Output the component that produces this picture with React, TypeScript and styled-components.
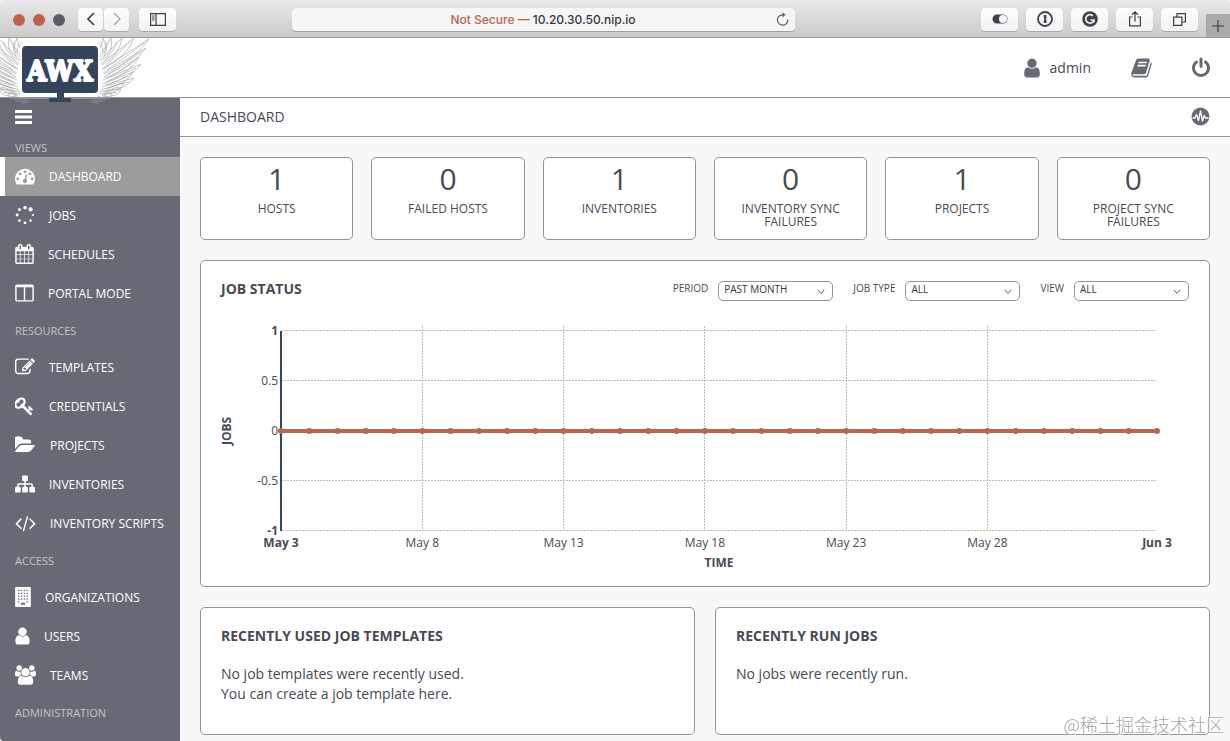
import React from "react";
import styled, { createGlobalStyle } from "styled-components";

const ink = "#484a54";
const slate = "#666a74";
const navy = "#35445a";
const rust = "#b8664f";
const line = "#929497";

const GlobalStyle = createGlobalStyle`
  *, *::before, *::after { box-sizing: border-box; }
  body {
    margin: 0;
    background: #f7f8f7;
    color: ${ink};
    font-family: "Open Sans", "Noto Sans", sans-serif;
    font-size: 14px;
  }
  h1, h2, p, ul, dl, dt, dd { margin: 0; padding: 0; }
  ul { list-style: none; }
  button { font: inherit; color: inherit; cursor: pointer; }
  a { color: inherit; text-decoration: none; }
  svg { display: block; }
`;

/* ---------- browser frame ---------- */

const Page = styled.div`
  display: flex;
  flex-direction: column;
  min-height: 100vh;
`;

const Chrome = styled.div`
  display: flex;
  align-items: flex-start;
  height: 38px;
  padding-top: 8px;
  background: linear-gradient(#e9e9e9, #dadada 50%, #cbcbcb);
  border-bottom: 1px solid #9b9b9b;
  border-radius: 4px 4px 0 0;
`;

const ChromeStart = styled.div`
  display: flex;
  flex: 0 0 292px;
  align-items: center;
  padding-left: 13px;
`;

const ChromeEnd = styled.div`
  display: flex;
  flex: 0 0 435px;
  justify-content: flex-end;
  gap: 8px;
`;

const Lights = styled.div`
  display: flex;
  gap: 8px;
  margin-right: 13px;
`;

const Light = styled.span<{ $color: string }>`
  width: 12px;
  height: 12px;
  border-radius: 50%;
  background: ${(p) => p.$color};
`;

const ChromeButton = styled.button<{ $width?: number }>`
  display: flex;
  align-items: center;
  justify-content: center;
  width: ${(p) => p.$width ?? 37}px;
  height: 23px;
  padding: 0 0 1px;
  border: 0;
  border-radius: 4px;
  background: linear-gradient(#fdfdfd, #f3f3f3);
  box-shadow: 0 1px 0 #a9a9a9, 0 0 1px #b5b5b5;
`;

const NavPair = styled.div`
  display: flex;
  gap: 1px;
  margin-right: 10px;
`;

const NewTab = styled.button`
  display: flex;
  align-items: center;
  justify-content: center;
  width: 24px;
  height: 23px;
  margin-top: 6px;
  padding: 0;
  border: 0;
  background: #aaaaaa;
`;

const AddressBar = styled.div`
  display: flex;
  flex: 1;
  align-items: center;
  height: 23px;
  padding: 0 6px 0 18px;
  border-radius: 4px;
  background: #f6f6f6;
  box-shadow: 0 1px 0 #a0a0a0, 0 0 1px #b5b5b5;
  font: 12px/23px Inter, Roboto, sans-serif;
  color: #34363f;
`;

const Address = styled.span`
  flex: 1;
  text-align: center;
  font-weight: 500;
`;

const Warning = styled.span`
  color: ${rust};
`;

const PlainButton = styled.button`
  display: flex;
  align-items: center;
  padding: 0 0 2px;
  border: 0;
  background: none;
`;

/* ---------- application header ---------- */

const Header = styled.header`
  position: relative;
  display: flex;
  align-items: center;
  justify-content: flex-end;
  height: 60px;
  padding-right: 20px;
  background: #fff;
  border-bottom: 1px solid ${line};
  color: ${slate};
`;

const LogoLink = styled.a`
  position: absolute;
  top: 0;
  left: 0;
  z-index: 1;
`;

const HeaderLinks = styled.nav`
  display: flex;
  align-items: center;
  gap: 40px;
`;

const HeaderLink = styled.a`
  display: flex;
  align-items: center;
  gap: 10px;
  line-height: 20px;
`;

const UserName = styled.span`
  color: ${ink};
`;

const Columns = styled.div`
  display: flex;
  flex: 1;
`;

/* ---------- sidebar ---------- */

const Sidebar = styled.nav`
  flex: 0 0 180px;
  background: ${slate};
  color: #fff;
  font-size: 12px;
  border-bottom-left-radius: 4px;
`;

const MenuToggle = styled(PlainButton)`
  height: 39px;
  padding-left: 15px;
`;

const SectionLabel = styled.h2<{ $first?: boolean }>`
  height: ${(p) => (p.$first ? 20 : 35)}px;
  padding-left: 15px;
  font-size: 11px;
  font-weight: 400;
  line-height: ${(p) => (p.$first ? 22 : 35)}px;
  color: #c3c5ca;
`;

const NavItem = styled.a<{ $active?: boolean }>`
  display: flex;
  align-items: center;
  gap: 14px;
  height: 39px;
  padding-left: 10px;
  border-left: 5px solid ${(p) => (p.$active ? "#fff" : "transparent")};
  background: ${(p) => (p.$active ? "#9b9c9d" : "transparent")};

  svg { margin-bottom: 2px; }
`;

/* ---------- main column ---------- */

const Main = styled.main`
  flex: 1;
  min-width: 0;
`;

const TitleBar = styled.div`
  display: flex;
  align-items: center;
  justify-content: space-between;
  height: 39px;
  padding: 0 20px;
  background: #fff;
  border-bottom: 1px solid ${line};
`;

const PageTitle = styled.h1`
  padding-bottom: 2px;
  font-size: 14px;
  font-weight: 400;
`;

const Content = styled.div`
  display: flex;
  flex-direction: column;
  gap: 20px;
  padding: 20px 20px 6px;
`;

const Stats = styled.div`
  display: grid;
  grid-template-columns: repeat(6, 1fr);
  gap: 18px;
`;

const Panel = styled.section`
  background: #fff;
  border: 1px solid ${line};
  border-radius: 5px;
`;

const Stat = styled.a`
  display: block;
  min-height: 83px;
  padding: 0 20px;
  background: #fff;
  border: 1px solid ${line};
  border-radius: 5px;
  text-align: center;
`;

const StatValue = styled.strong`
  display: block;
  margin-bottom: 2px;
  font-size: 30px;
  font-weight: 400;
  line-height: 42px;
`;

const StatLabel = styled.span`
  display: block;
  font-size: 12px;
  line-height: 13px;
`;

const ChartPanel = styled(Panel)`
  padding: 20px 20px 10px;
`;

const PanelHeader = styled.div`
  display: flex;
  justify-content: space-between;
  align-items: flex-start;
`;

const PanelTitle = styled.h2`
  font-size: 14px;
  font-weight: 700;
  line-height: 16px;
`;

const Filters = styled.div`
  display: flex;
  gap: 20px;
`;

const Filter = styled.label`
  display: flex;
  gap: 10px;
  font-size: 10px;
  line-height: 14px;
`;

const SelectBox = styled.span`
  position: relative;
  display: block;
  width: 115px;

  svg {
    position: absolute;
    top: 8px;
    right: 8px;
    pointer-events: none;
  }
`;

const Select = styled.select`
  appearance: none;
  width: 100%;
  height: 20px;
  padding: 0 20px 3px 5px;
  border: 1px solid ${line};
  border-radius: 5px;
  background: #fff;
  color: #34363f;
  font: 500 10px/15px "Open Sans", sans-serif;
`;

const ChartArea = styled.div`
  margin-top: 20px;
  padding: 0 32px 0 60px;
`;

const ChartSvg = styled.svg`
  width: 100%;
  height: 255px;
  overflow: visible;
  font-size: 12px;

  text { fill: ${ink}; }
  .bold { font-weight: 700; }
  .grid { stroke: #bcbcbc; stroke-dasharray: 2 1; shape-rendering: crispEdges; }
`;

const RecentPanels = styled.div`
  display: grid;
  grid-template-columns: repeat(2, 1fr);
  gap: 20px;
`;

const RecentPanel = styled(Panel)`
  padding: 20px;
`;

const RecentText = styled.p`
  min-height: 50px;
  margin-top: 20px;
  line-height: 20px;
`;

const Watermark = styled.div`
  position: fixed;
  right: 6px;
  bottom: 4px;
  font: 300 18px/26px "Noto Sans CJK SC", sans-serif;
  color: #a3a3a6;
  text-shadow: 0 0 1px #fff, 1px 1px 0 #fff;
  pointer-events: none;
`;

/* ---------- icons ---------- */

type Glyph = { box: string; width: number; shape: React.ReactNode };

const spinnerDots: [number, number, number][] = [
  [896, 250, 160],
  [1394, 398, 190],
  [1600, 896, 96],
  [1394, 1394, 110],
  [896, 1600, 128],
  [398, 1394, 120],
  [192, 896, 128],
  [398, 398, 140],
];

const windowRows = [256, 512, 768, 1024];
const windowCols = [256, 512, 768, 1024];

const glyphs: Record<string, Glyph> = {
  dashboard: {
    box: "0 0 1792 1792",
    width: 20,
    shape: (
      <path d="M384 1152q0-53-37.5-90.5t-90.5-37.5-90.5 37.5-37.5 90.5 37.5 90.5 90.5 37.5 90.5-37.5 37.5-90.5zm192-448q0-53-37.5-90.5t-90.5-37.5-90.5 37.5-37.5 90.5 37.5 90.5 90.5 37.5 90.5-37.5 37.5-90.5zm428 481l101-382q6-26-7.5-48.5t-38.5-29.5-48 6.5-30 39.5l-101 382q-60 5-107 43.5t-63 98.5q-20 77 20 146t117 89 146-20 89-117q16-60-6-117t-72-91zm660-33q0-53-37.5-90.5t-90.5-37.5-90.5 37.5-37.5 90.5 37.5 90.5 90.5 37.5 90.5-37.5 37.5-90.5zm-640-640q0-53-37.5-90.5t-90.5-37.5-90.5 37.5-37.5 90.5 37.5 90.5 90.5 37.5 90.5-37.5 37.5-90.5zm448 192q0-53-37.5-90.5t-90.5-37.5-90.5 37.5-37.5 90.5 37.5 90.5 90.5 37.5 90.5-37.5 37.5-90.5zm320 448q0 261-141 483-19 29-54 29h-1402q-35 0-54-29-141-221-141-483 0-182 71-348t191-286 286-191 348-71 348 71 286 191 191 286 71 348z" />
    ),
  },
  jobs: {
    box: "0 0 1792 1792",
    width: 20,
    shape: spinnerDots.map(([cx, cy, r]) => <circle key={`${cx}-${cy}`} cx={cx} cy={cy} r={r} />),
  },
  schedules: {
    box: "64 0 1664 1792",
    width: 19,
    shape: (
      <path d="M192 1664h288v-288h-288v288zm352 0h320v-288h-320v288zm-352-352h288v-320h-288v320zm352 0h320v-320h-320v320zm-352-384h288v-288h-288v288zm736 736h320v-288h-320v288zm-384-736h320v-288h-320v288zm768 736h288v-288h-288v288zm-384-352h320v-320h-320v320zm-352-864v-288q0-13-9.5-22.5t-22.5-9.5h-64q-13 0-22.5 9.5t-9.5 22.5v288q0 13 9.5 22.5t22.5 9.5h64q13 0 22.5-9.5t9.5-22.5zm736 864h288v-320h-288v320zm-384-384h320v-288h-320v288zm384 0h288v-288h-288v288zm32-480v-288q0-13-9.5-22.5t-22.5-9.5h-64q-13 0-22.5 9.5t-9.5 22.5v288q0 13 9.5 22.5t22.5 9.5h64q13 0 22.5-9.5t9.5-22.5zm384-64v1280q0 52-38 90t-90 38h-1408q-52 0-90-38t-38-90v-1280q0-52 38-90t90-38h128v-96q0-66 47-113t113-47h64q66 0 113 47t47 113v96h384v-96q0-66 47-113t113-47h64q66 0 113 47t47 113v96h128q52 0 90 38t38 90z" />
    ),
  },
  portal: {
    box: "64 0 1664 1792",
    width: 19,
    shape: (
      <path d="M224 1536h608v-1152h-640v1120q0 13 9.5 22.5t22.5 9.5zm1376-32v-1120h-640v1152h608q13 0 22.5-9.5t9.5-22.5zm128-1216v1216q0 66-47 113t-113 47h-1344q-66 0-113-47t-47-113v-1216q0-66 47-113t113-47h1344q66 0 113 47t47 113z" />
    ),
  },
  templates: {
    box: "0 0 1792 1792",
    width: 20,
    shape: (
      <path d="M888 1184l116-116-152-152-116 116v56h96v96h56zm440-720q-16-16-33 1l-350 350q-17 17-1 33t33-1l350-350q17-17 1-33zm80 594v190q0 119-84.5 203.5t-203.5 84.5h-832q-119 0-203.5-84.5t-84.5-203.5v-832q0-119 84.5-203.5t203.5-84.5h832q63 0 117 25 15 7 18 23 3 17-9 29l-49 49q-14 14-32 8-23-6-45-6h-832q-66 0-113 47t-47 113v832q0 66 47 113t113 47h832q66 0 113-47t47-113v-126q0-13 9-22l64-64q15-15 35-7t20 29zm-96-738l288 288-672 672h-288v-288zm444 132l-92 92-288-288 92-92q28-28 68-28t68 28l152 152q28 28 28 68t-28 68z" />
    ),
  },
  credentials: {
    box: "64 0 1792 1792",
    width: 20,
    shape: (
      <path d="M832 512q0-80-56-136t-136-56-136 56-56 136q0 42 19 83-41-19-83-19-80 0-136 56t-56 136 56 136 136 56 136-56 56-136q0-42-19-83 41 19 83 19 80 0 136-56t56-136zm851 704q0 17-49 66t-66 49q-9 0-28.5-16t-36.5-33-38.5-40-24.5-26l-96 96 220 220q28 28 28 68 0 42-39 81t-81 39q-40 0-68-28l-671-671q-176 131-365 131-163 0-265.5-102.5t-102.5-265.5q0-160 95-313t248-248 313-95q163 0 265.5 102.5t102.5 265.5q0 189-131 365l355 355 96-96q-3-3-26-24.5t-40-38.5-33-36.5-16-28.5q0-17 49-66t66-49q13 0 23 10 6 6 46 44.5t82 79.5 86.5 86 73 78 28.5 41z" />
    ),
  },
  projects: {
    box: "0 0 1920 1792",
    width: 21,
    shape: (
      <path d="M1815 952q0 31-31 66l-336 396q-43 51-120.5 86.5t-143.5 35.5h-1088q-34 0-60.5-13t-26.5-43q0-31 31-66l336-396q43-51 120.5-86.5t143.5-35.5h1088q34 0 60.5 13t26.5 43zm-343-344v160h-832q-94 0-197 47.5t-164 119.5l-337 396-5 6q0-4-.5-12.5t-.5-12.5v-960q0-92 66-158t158-66h320q92 0 158 66t66 158v32h544q92 0 158 66t66 158z" />
    ),
  },
  inventories: {
    box: "0 0 1792 1792",
    width: 20,
    shape: (
      <path d="M1792 1248v320q0 40-28 68t-68 28h-320q-40 0-68-28t-28-68v-320q0-40 28-68t68-28h96v-192h-512v192h96q40 0 68 28t28 68v320q0 40-28 68t-68 28h-320q-40 0-68-28t-28-68v-320q0-40 28-68t68-28h96v-192h-512v192h96q40 0 68 28t28 68v320q0 40-28 68t-68 28h-320q-40 0-68-28t-28-68v-320q0-40 28-68t68-28h96v-192q0-52 38-90t90-38h512v-192h-96q-40 0-68-28t-28-68v-320q0-40 28-68t68-28h320q40 0 68 28t28 68v320q0 40-28 68t-68 28h-96v192h512q52 0 90 38t38 90v192h96q40 0 68 28t28 68z" />
    ),
  },
  scripts: {
    box: "0 0 1920 1792",
    width: 21,
    shape: (
      <path d="M617 1399l-50 50q-10 10-23 10t-23-10l-466-466q-10-10-10-23t10-23l466-466q10-10 23-10t23 10l50 50q10 10 10 23t-10 23l-393 393 393 393q10 10 10 23t-10 23zm591-1067l-373 1291q-4 13-15.5 19.5t-23.5 2.5l-62-17q-13-4-19.5-15.5t-2.5-24.5l373-1291q4-13 15.5-19.5t23.5-2.5l62 17q13 4 19.5 15.5t2.5 24.5zm657 651l-466 466q-10 10-23 10t-23-10l-50-50q-10-10-10-23t10-23l393-393-393-393q-10-10-10-23t10-23l50-50q10-10 23-10t23 10l466 466q10 10 10 23t-10 23z" />
    ),
  },
  organizations: {
    box: "0 0 1408 1792",
    width: 16,
    shape: (
      <path
        fillRule="evenodd"
        d={
          "M64 0h1280q64 0 64 64v1664q0 64-64 64H64q-64 0-64-64V64Q0 0 64 0zM512 1408v192h384v-192z" +
          windowRows
            .map((y) => windowCols.map((x) => `M${x} ${y}v110h128v-110z`).join(""))
            .join("") +
          "M256 1280v110h128v-110zM1024 1280v110h128v-110z"
        }
      />
    ),
  },
  user: {
    box: "256 0 1280 1792",
    width: 15,
    shape: (
      <path d="M1536 1399q0 109-62.5 187t-150.5 78h-854q-88 0-150.5-78t-62.5-187q0-85 8.5-160.5t31.5-152 58.5-131 94-89 134.5-34.5q131 128 313 128t313-128q76 0 134.5 34.5t94 89 58.5 131 31.5 152 8.5 160.5zm-256-887q0 159-112.5 271.5t-271.5 112.5-271.5-112.5-112.5-271.5 112.5-271.5 271.5-112.5 271.5 112.5 112.5 271.5z" />
    ),
  },
  teams: {
    box: "0 0 1920 1792",
    width: 21,
    shape: (
      <path d="M593 896q-162 5-265 128h-134q-82 0-138-40.5t-56-118.5q0-353 124-353 6 0 43.5 21t97.5 42.5 119 21.5q67 0 133-23-5 37-5 66 0 139 81 256zm1071 637q0 120-73 189.5t-194 69.5h-874q-121 0-194-69.5t-73-189.5q0-53 3.5-103.5t14-109 26.5-108.5 43-97.5 62-81 85.5-53.5 111.5-20q10 0 43 21.5t73 48 107 48 135 21.5 135-21.5 107-48 73-48 43-21.5q61 0 111.5 20t85.5 53.5 62 81 43 97.5 26.5 108.5 14 109 3.5 103.5zm-1024-1277q0 106-75 181t-181 75-181-75-75-181 75-181 181-75 181 75 75 181zm704 384q0 159-112.5 271.5t-271.5 112.5-271.5-112.5-112.5-271.5 112.5-271.5 271.5-112.5 271.5 112.5 112.5 271.5zm576 225q0 78-56 118.5t-138 40.5h-134q-103-123-265-128 81-117 81-256 0-29-5-66 66 23 133 23 59 0 119-21.5t97.5-42.5 43.5-21q124 0 124 353zm-128-609q0 106-75 181t-181 75-181-75-75-181 75-181 181-75 181 75 75 181z" />
    ),
  },
  book: {
    box: "64 0 1664 1792",
    width: 21,
    shape: (
      <path d="M1703 478q40 57 18 129l-275 906q-19 64-76.5 107.5t-122.5 43.5h-923q-77 0-148.5-53.5t-99.5-131.5q-24-67-2-127 0-4 3-27t4-37q1-8-3-21.5t-3-19.5q2-11 8-21t16.5-23.5 16.5-23.5q23-38 45-91.5t30-91.5q3-10 .5-30t-.5-28q3-11 17-28t17-23q21-36 42-92t25-90q1-9-2.5-32t.5-28q4-13 22-30.5t22-22.5q19-26 42.5-84.5t27.5-96.5q1-8-3-25.5t-2-26.5q2-8 9-18t18-23 17-21q8-12 16.5-30.5t15-35 16-36 19.5-32 26.5-23.5 36-11.5 47.5 5.5l-1 3q38-9 51-9h761q74 0 114 56t18 130l-274 906q-36 119-71.5 153.5t-128.5 34.5h-869q-27 0-38 15-11 16-1 43 24 70 144 70h923q29 0 56-15.5t35-41.5l300-987q7-22 5-57 38 15 59 43zm-1064 2q-4 13 2 22.5t20 9.5h608q13 0 25.5-9.5t16.5-22.5l21-64q4-13-2-22.5t-20-9.5h-608q-13 0-25.5 9.5t-16.5 22.5zm-83 256q-4 13 2 22.5t20 9.5h608q13 0 25.5-9.5t16.5-22.5l21-64q4-13-2-22.5t-20-9.5h-608q-13 0-25.5 9.5t-16.5 22.5z" />
    ),
  },
  power: {
    box: "128 0 1536 1792",
    width: 18,
    shape: (
      <path d="M1664 896q0 156-61 298t-164 245-245 164-298 61-298-61-245-164-164-245-61-298q0-182 80.5-343t226.5-270q43-32 95.5-25t83.5 50q32 42 24.5 94.5t-49.5 84.5q-98 74-151.5 181t-53.5 228q0 104 40.5 198.5t109.5 163.5 163.5 109.5 198.5 40.5 198.5-40.5 163.5-109.5 109.5-163.5 40.5-198.5q0-121-53.5-228t-151.5-181q-42-32-49.5-84.5t24.5-94.5q31-43 84-50t95 25q146 109 226.5 270t80.5 343zm-640-768v640q0 52-38 90t-90 38-90-38-38-90v-640q0-52 38-90t90-38 90 38 38 90z" />
    ),
  },
};

function Icon({ name, width, height = 20 }: { name: string; width?: number; height?: number }) {
  const g = glyphs[name];
  return (
    <svg viewBox={g.box} width={width ?? g.width} height={height} fill="currentColor" aria-hidden="true">
      {g.shape}
    </svg>
  );
}

/* Each feather runs from its root to its tip and back: root x, root y, tip x, tip y. */
const feathers = [
  [100, 22, 122, 0],
  [101, 26, 134, 0],
  [102, 31, 149, 1],
  [103, 35, 146, 10],
  [104, 39, 139, 19],
  [103, 42, 141, 26],
  [103, 46, 133, 34],
  [102, 49, 134, 40],
  [101, 52, 124, 45],
  [100, 54, 121, 51],
  [97, 56, 112, 56],
  [93, 57, 104, 61],
  [88, 58, 97, 64],
  [99, 18, 111, 0],
  [98, 14, 103, 0],
];

function Wing() {
  return (
    <>
      {feathers.map(([x, y, tx, ty]) => {
        const mx = (x + tx) / 2;
        const my = (y + ty) / 2;
        return (
          <path
            key={`${tx}-${ty}`}
            d={`M${x} ${y}Q${mx + 2} ${my - 1} ${tx} ${ty}Q${mx + 9} ${my + 6} ${x + 2} ${y + 5}M${x + 5} ${y + 1}Q${mx + 3} ${my + 1} ${tx - 5} ${ty + 4}`}
          />
        );
      })}
    </>
  );
}

function Logo() {
  return (
    <svg width="152" height="66" viewBox="0 0 152 66" role="img" aria-label="AWX">
      <g fill="none" stroke="#a8aaac" strokeWidth="0.7">
        <Wing />
        <g transform="translate(120 0) scale(-1 1)">
          <Wing />
        </g>
      </g>
      <path d="M20 59V12q0-6 6-6h68q6 0 6 6v43q0 4-4 4z" fill="#fff" />
      <path d="M0 60h152v6H0z" fill={slate} opacity="0.4" />
      <path d="M20 59h80v2H20z" fill={line} />
      <path d="M57 54h7v6h7v4H49v-4h8z" fill={navy} />
      <rect x="22" y="8" width="76" height="47" rx="4" fill={navy} />
      <text
        x="60"
        y="43"
        fill="#fff"
        stroke="#fff"
        strokeWidth="2"
        strokeLinejoin="bevel"
        textAnchor="middle"
        fontFamily="'DejaVu Serif Condensed', 'DejaVu Serif', serif"
        fontWeight="700"
        fontSize="28"
      >
        AWX
      </text>
    </svg>
  );
}

/* ---------- chart ---------- */

const DAYS = 31;
const xTicks = [
  { day: 0, label: "May 3", bold: true },
  { day: 5, label: "May 8" },
  { day: 10, label: "May 13" },
  { day: 15, label: "May 18" },
  { day: 20, label: "May 23" },
  { day: 25, label: "May 28" },
  { day: 31, label: "Jun 3", bold: true },
];
const yTicks = [
  { y: 9, label: "1", bold: true },
  { y: 59, label: "0.5" },
  { y: 109, label: "0" },
  { y: 159, label: "-0.5" },
  { y: 209, label: "-1", bold: true },
];
const at = (day: number) => `${(day / DAYS) * 100}%`;

function JobChart() {
  return (
    <ChartArea>
      <ChartSvg role="img" aria-label="Jobs over time">
        {yTicks.map((t) => (
          <React.Fragment key={t.label}>
            <line className="grid" x1="0" x2="100%" y1={t.y} y2={t.y} />
            <text className={t.bold ? "bold" : undefined} x="-3" y={t.y + 5} textAnchor="end">
              {t.label}
            </text>
          </React.Fragment>
        ))}
        {xTicks.map((t) => (
          <React.Fragment key={t.label}>
            {!t.bold && <line className="grid" x1={at(t.day)} x2={at(t.day)} y1="5" y2="210" />}
            <text className={t.bold ? "bold" : undefined} x={at(t.day)} y="226" textAnchor="middle">
              {t.label}
            </text>
          </React.Fragment>
        ))}
        <line x1="0" x2="0" y1="10" y2="210" stroke={navy} strokeWidth="2" />
        <line x1="0" x2="100%" y1="110" y2="110" stroke={rust} strokeWidth="4" />
        {Array.from({ length: DAYS + 1 }, (_, i) => (
          <circle key={i} cx={at(i)} cy="110" r="3" fill={rust} />
        ))}
        <text className="bold" x="50%" y="246" textAnchor="middle">
          TIME
        </text>
        <text className="bold" textAnchor="middle" transform="translate(-50 110) rotate(-90)">
          JOBS
        </text>
      </ChartSvg>
    </ChartArea>
  );
}

/* ---------- content ---------- */

const sections = [
  {
    label: "VIEWS",
    items: [
      ["dashboard", "DASHBOARD"],
      ["jobs", "JOBS"],
      ["schedules", "SCHEDULES"],
      ["portal", "PORTAL MODE"],
    ],
  },
  {
    label: "RESOURCES",
    items: [
      ["templates", "TEMPLATES"],
      ["credentials", "CREDENTIALS"],
      ["projects", "PROJECTS"],
      ["inventories", "INVENTORIES"],
      ["scripts", "INVENTORY SCRIPTS"],
    ],
  },
  {
    label: "ACCESS",
    items: [
      ["organizations", "ORGANIZATIONS"],
      ["user", "USERS"],
      ["teams", "TEAMS"],
    ],
  },
  { label: "ADMINISTRATION", items: [] },
];

const stats: [number, string][] = [
  [1, "HOSTS"],
  [0, "FAILED HOSTS"],
  [1, "INVENTORIES"],
  [0, "INVENTORY SYNC FAILURES"],
  [1, "PROJECTS"],
  [0, "PROJECT SYNC FAILURES"],
];

const filters: [string, string][] = [
  ["PERIOD", "PAST MONTH"],
  ["JOB TYPE", "ALL"],
  ["VIEW", "ALL"],
];

function BrowserChrome() {
  const stroke = { fill: "none", stroke: "#3c3e48", strokeWidth: 1.2 };
  return (
    <Chrome>
      <ChromeStart>
        <Lights>
          <Light $color="#c0614c" />
          <Light $color="#c0614c" />
          <Light $color="#5a5c66" />
        </Lights>
        <NavPair>
          <ChromeButton $width={25} aria-label="Back">
            <svg width="8" height="14" viewBox="0 0 8 14" {...stroke} strokeWidth={1.6}>
              <path d="M7 1L1 7l6 6" />
            </svg>
          </ChromeButton>
          <ChromeButton $width={25} aria-label="Forward">
            <svg width="8" height="14" viewBox="0 0 8 14" {...stroke} stroke="#a0a0a0">
              <path d="M1 1l6 6-6 6" />
            </svg>
          </ChromeButton>
        </NavPair>
        <ChromeButton aria-label="Sidebar">
          <svg width="16" height="13" viewBox="0 0 16 13" {...stroke}>
            <path d="M.6.6h14.8v11.8H.6zM6 .6v11.8M2 3h2.500M2 5h2.500M2 7h2.500" />
          </svg>
        </ChromeButton>
      </ChromeStart>
      <AddressBar>
        <Address>
          <Warning>Not Secure —</Warning> 10.20.30.50.nip.io
        </Address>
        <PlainButton aria-label="Reload">
          <svg width="13" height="14" viewBox="0 0 13 14" fill="none" stroke="#5c5e66" strokeWidth="1.2">
            <path d="M11.800 7.500A5.200 5.200 0 1 1 6.500 2.800H8" />
            <path d="M6.500.2L9.500 2.800 6.500 5.400z" fill="#5c5e66" stroke="none" />
          </svg>
        </PlainButton>
      </AddressBar>
      <ChromeEnd>
        <ChromeButton aria-label="Toggle">
          <svg width="16" height="10" viewBox="0 0 16 10">
            <rect x=".5" y=".5" width="15" height="9" rx="4.500" fill="#40424e" />
            <circle cx="11" cy="5" r="4" fill="#fafafa" />
          </svg>
        </ChromeButton>
        <ChromeButton aria-label="Passwords">
          <svg width="16" height="16" viewBox="0 0 16 16">
            <circle cx="8" cy="8" r="7" fill="none" stroke="#40424e" strokeWidth="1.800" />
            <path d="M6.800 4h2.700v3l-.7 1 .7 1v3H6.800V9l.7-1-.7-1z" fill="#40424e" />
          </svg>
        </ChromeButton>
        <ChromeButton aria-label="Grammar">
          <svg width="16" height="16" viewBox="0 0 16 16">
            <circle cx="8" cy="8" r="7.800" fill="#40424e" />
            <path d="M10.800 4.800A4.200 4.200 0 1 0 12 9H8.500M12 8.500v3" fill="none" stroke="#eee" strokeWidth="1.700" />
          </svg>
        </ChromeButton>
        <ChromeButton aria-label="Share">
          <svg width="12" height="16" viewBox="0 0 12 16" {...stroke}>
            <path d="M3.500 6H.6v8.800h10.800V6H8.500M6 10.500V1M3 3.800L6 .9l3 2.900" />
          </svg>
        </ChromeButton>
        <ChromeButton aria-label="Tabs">
          <svg width="13" height="13" viewBox="0 0 13 13" {...stroke}>
            <path d="M.6 4.100h8.300v8.300H.6zM4 4V.6h8.400V9H9" />
          </svg>
        </ChromeButton>
        <NewTab aria-label="New tab">
          <svg width="12" height="12" viewBox="0 0 12 12" {...stroke}>
            <path d="M6 0v12M0 6h12" />
          </svg>
        </NewTab>
      </ChromeEnd>
    </Chrome>
  );
}

export default function App() {
  return (
    <Page>
      <GlobalStyle />
      <BrowserChrome />
      <Header>
        <LogoLink href="#" aria-label="AWX home">
          <Logo />
        </LogoLink>
        <HeaderLinks>
          <HeaderLink href="#">
            <Icon name="user" width={16} height={22} />
            <UserName>admin</UserName>
          </HeaderLink>
          <HeaderLink href="#" aria-label="Documentation">
            <Icon name="book" height={22} />
          </HeaderLink>
          <HeaderLink href="#" aria-label="Log out">
            <Icon name="power" height={22} />
          </HeaderLink>
        </HeaderLinks>
      </Header>
      <Columns>
        <Sidebar>
          <MenuToggle aria-label="Toggle menu">
            <svg width="17" height="14" viewBox="0 0 17 14" fill="#fff">
              <path d="M0 0h17v3H0zM0 5.500h17v3H0zM0 11h17v3H0z" />
            </svg>
          </MenuToggle>
          {sections.map((section, s) => (
            <React.Fragment key={section.label}>
              <SectionLabel $first={s === 0}>{section.label}</SectionLabel>
              <ul>
                {section.items.map(([icon, label]) => (
                  <li key={label}>
                    <NavItem href="#" $active={icon === "dashboard"}>
                      <Icon name={icon} />
                      {label}
                    </NavItem>
                  </li>
                ))}
              </ul>
            </React.Fragment>
          ))}
        </Sidebar>
        <Main>
          <TitleBar>
            <PageTitle>DASHBOARD</PageTitle>
            <PlainButton aria-label="Activity stream">
              <svg width="19" height="19" viewBox="0 0 19 19">
                <circle cx="9.500" cy="9.500" r="9" fill={slate} />
                <path
                  d="M1.500 11H4l1.500-3.500 2 6L9.500 4l2 10 1.800-5.500L14.500 11h3"
                  fill="none"
                  stroke="#fff"
                  strokeWidth="1.300"
                  strokeLinejoin="round"
                />
              </svg>
            </PlainButton>
          </TitleBar>
          <Content>
            <Stats>
              {stats.map(([value, label]) => (
                <Stat key={label} href="#">
                  <StatValue>{value}</StatValue>
                  <StatLabel>{label}</StatLabel>
                </Stat>
              ))}
            </Stats>
            <ChartPanel>
              <PanelHeader>
                <PanelTitle>JOB STATUS</PanelTitle>
                <Filters>
                  {filters.map(([label, value]) => (
                    <Filter key={label}>
                      {label}
                      <SelectBox>
                        <Select defaultValue={value}>
                          <option>{value}</option>
                        </Select>
                        <svg width="8" height="6" viewBox="0 0 8 6" fill="none" stroke="#5c5e66">
                          <path d="M.8.8L4 4.500 7.200.8" />
                        </svg>
                      </SelectBox>
                    </Filter>
                  ))}
                </Filters>
              </PanelHeader>
              <JobChart />
            </ChartPanel>
            <RecentPanels>
              <RecentPanel>
                <PanelTitle>RECENTLY USED JOB TEMPLATES</PanelTitle>
                <RecentText>
                  No job templates were recently used.
                  <br />
                  You can create a job template <a href="#">here</a>.
                </RecentText>
              </RecentPanel>
              <RecentPanel>
                <PanelTitle>RECENTLY RUN JOBS</PanelTitle>
                <RecentText>No jobs were recently run.</RecentText>
              </RecentPanel>
            </RecentPanels>
          </Content>
        </Main>
      </Columns>
      <Watermark>@稀土掘金技术社区</Watermark>
    </Page>
  );
}
